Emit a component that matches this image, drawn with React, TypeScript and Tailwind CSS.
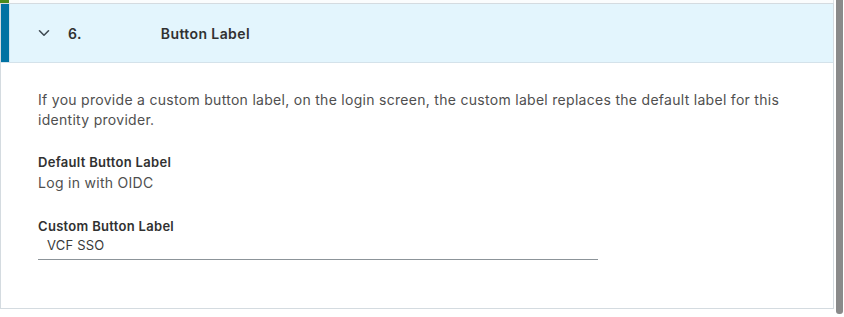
import React from "react";

const ChevronDown: React.FC = () => (
  <svg width="12" height="12" viewBox="0 0 12 12" fill="none">
    <path d="M1.5 3.8 L6 8.2 L10.5 3.8" stroke="#3f4a52" strokeWidth="1.6" strokeLinecap="round" strokeLinejoin="round" />
  </svg>
);

const App: React.FC = () => {
  return (
    <div className="flex h-[317px] w-[844px] bg-white font-['Inter',sans-serif] text-[#333]">
      <div className="flex w-[834px] flex-col">
        {/* tail of the previous step */}
        <div className="flex h-[3px]">
          <div className="w-[9px] bg-[#4b8a1c]" />
          <div className="flex-1 border-r border-[#dde3e6] bg-[#fafcfd]" />
        </div>

        <div className="flex h-[306px] flex-col border border-[#d4dbe0]">
          <div className="flex h-[59px] items-stretch border-b border-[#d4e2ea] bg-[#e3f5fd]">
            <div className="w-[8px] bg-[#0072a3]" />
            <div className="w-px bg-[#cfe3ee]" />
            <div className="flex items-center pl-[28px]">
              <ChevronDown />
            </div>
            <span className="flex items-center pl-[18px] text-[14px] font-semibold tracking-[0.4px] text-[#313131]">6.</span>
            <span className="flex items-center pl-[79px] text-[14px] font-semibold tracking-[0.4px] text-[#313131]">Button Label</span>
          </div>

          <div className="flex flex-col pl-[37px] pt-[27px]">
            <p className="w-[760px] text-[14px] leading-[20px] tracking-[0.29px] text-[#4f4f4f]">
              If you provide a custom button label, on the login screen, the custom label replaces the default label for this
              identity provider.
            </p>

            <div className="mt-[22px] text-[13px] font-semibold leading-[20px] tracking-[0.3px] text-[#313131]">Default Button Label</div>
            <div className="mt-px text-[14px] leading-[20px] tracking-[0.29px] text-[#4f4f4f]">Log in with OIDC</div>

            <div className="mt-[23px] text-[13px] font-semibold leading-[20px] tracking-[0.3px] text-[#313131]">Custom Button Label</div>
            <div className="flex h-[24px] w-[560px] items-start border-b border-[#8c9499] pl-[9px] text-[13px] leading-[18px] tracking-[0.2px] text-[#3a3a3a]">
              VCF SSO
            </div>
          </div>
        </div>
      </div>

      <div className="flex w-[10px] justify-center pt-0">
        <div className="h-[314px] w-[7px] rounded-b-[3px] bg-[#8a8a8a]" />
      </div>
    </div>
  );
};

export default App;
